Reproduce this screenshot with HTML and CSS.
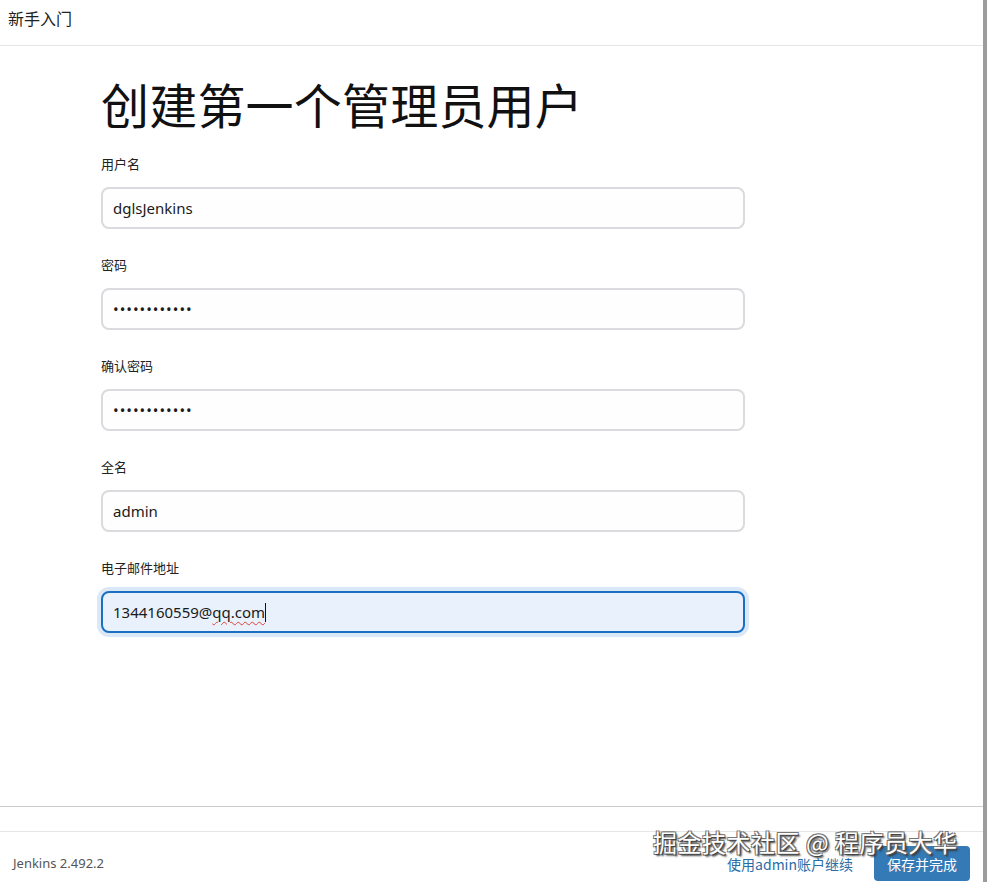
FILE: index.html
```html
<!DOCTYPE html>
<html lang="zh">
<head>
<meta charset="utf-8">
<title>新手入门</title>
<link rel="stylesheet" href="styles.css">
</head>
<body>
<div class="page">
  <header class="top">新手入门</header>
  <main class="main">
    <h1 class="title">创建第一个管理员用户</h1>
    <form class="form">
      <div class="field">
        <label class="label">用户名</label>
        <input class="input" type="text" value="dglsJenkins">
      </div>
      <div class="field">
        <label class="label">密码</label>
        <input class="input input-pw" type="password" value="123456789012">
      </div>
      <div class="field">
        <label class="label">确认密码</label>
        <input class="input input-pw" type="password" value="123456789012">
      </div>
      <div class="field">
        <label class="label">全名</label>
        <input class="input" type="text" value="admin">
      </div>
      <div class="field">
        <label class="label">电子邮件地址</label>
        <div class="input input-focus">1344160559@<span class="spell">qq.com</span><span class="caret"></span></div>
      </div>
    </form>
  </main>
  <div class="modal-footer"></div>
  <footer class="footer">
    <span class="version">Jenkins 2.492.2</span>
    <div class="actions">
      <a class="link" href="#">使用admin账户继续</a>
      <button class="btn" type="button">保存并完成</button>
    </div>
    <div class="watermark">掘金技术社区 @ 程序员大华</div>
  </footer>
</div>
</body>
</html>
```
FILE: styles.css
```css
html, body {
  margin: 0;
  padding: 0;
  background: #ffffff;
}
body {
  font-family: "Noto Sans", "Noto Sans CJK SC", sans-serif;
  color: #1a1a1a;
}
.page {
  width: 983px;
  height: 882px;
  border-right: 4px solid #9c9c9c;
  display: flex;
  flex-direction: column;
  box-sizing: content-box;
}
.top {
  height: 45px;
  border-bottom: 1px solid #e6e6e6;
  padding-left: 8px;
  font-size: 16px;
  line-height: 36px;
  color: #222;
  box-sizing: content-box;
  font-family: "Noto Sans CJK SC", sans-serif;
}
.main {
  flex: 1;
  padding: 27px 0 0 101px;
}
.title {
  margin: 0;
  font-family: "Noto Sans CJK SC", sans-serif;
  font-weight: 400;
  font-size: 48px;
  line-height: 60px;
  color: #111;
  letter-spacing: 0.2px;
}
.form {
  margin-top: 21px;
  display: flex;
  flex-direction: column;
  gap: 26px;
  width: 644px;
}
.field {
  display: flex;
  flex-direction: column;
  gap: 13px;
}
.label {
  font-family: "Noto Sans CJK SC", sans-serif;
  font-size: 13px;
  line-height: 20px;
  color: #222;
}
.input {
  box-sizing: border-box;
  width: 644px;
  height: 42px;
  border: 2px solid #d9dbde;
  border-radius: 8px;
  background: #fefefe;
  padding: 0 10px;
  font-family: "Noto Sans", "Noto Sans CJK SC", sans-serif;
  font-size: 15px;
  color: #1a1a1a;
  outline: none;
  margin: 0;
}
.input-pw {
  letter-spacing: 1px;
  font-size: 15px;
}
.input-focus {
  display: flex;
  align-items: center;
  border-color: #1b6fc2;
  background: #e9f1fc;
  box-shadow: 0 0 0 4px #dbe8f8;
}
.spell {
  text-decoration: underline wavy #e0403a;
  text-decoration-thickness: 1px;
  text-underline-offset: 3px;
}
.caret {
  display: inline-block;
  width: 1px;
  height: 19px;
  background: #111;
}
.modal-footer {
  height: 24px;
  border-top: 1px solid #cccccc;
  flex: none;
}
.footer {
  position: relative;
  height: 49px;
  border-top: 1px solid #e6e6e6;
  flex: none;
  display: flex;
  align-items: flex-end;
  justify-content: space-between;
  padding: 0 13px 1px 13px;
}
.version {
  font-size: 13px;
  color: #555;
  line-height: 20px;
  margin-bottom: 8px;
}
.actions {
  display: flex;
  align-items: center;
  gap: 21px;
}
.link {
  font-family: "Noto Sans CJK SC", sans-serif;
  font-size: 14px;
  color: #2a6ca4;
  text-decoration: none;
}
.btn {
  width: 96px;
  height: 35px;
  border: none;
  border-radius: 4px;
  background: #337ab7;
  color: #fff;
  font-family: "Noto Sans CJK SC", sans-serif;
  font-size: 14px;
  padding: 0;
}
.watermark {
  position: absolute;
  left: 653px;
  top: -5px;
  font-family: "Noto Sans CJK SC", sans-serif;
  font-size: 24px;
  line-height: 30px;
  color: #ffffff;
  letter-spacing: 0.5px;
  text-shadow: 1px 1px 0 #444, -1px -1px 0 #777, 1px -1px 0 #777, -1px 1px 0 #777, 2px 2px 2px #333;
  white-space: nowrap;
}
```
